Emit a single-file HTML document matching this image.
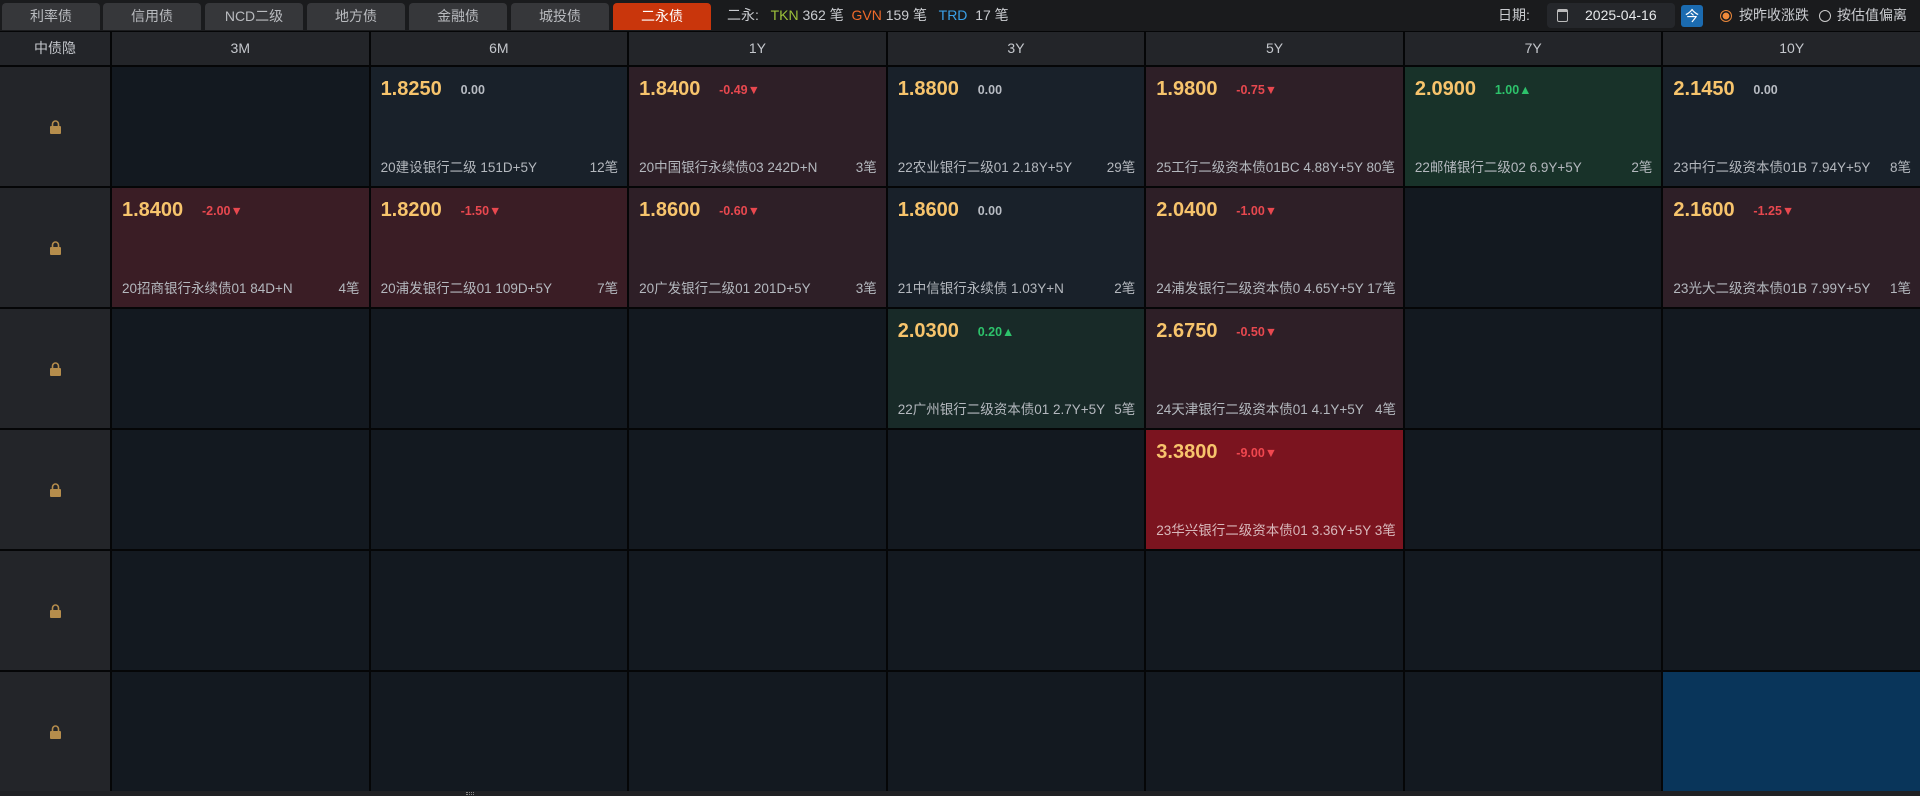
<!DOCTYPE html>
<html><head><meta charset="utf-8">
<style>
*{box-sizing:border-box;margin:0;padding:0}
body{width:1920px;height:796px;background:#050607;font-family:"Liberation Sans","Noto Sans CJK SC",sans-serif;overflow:hidden;position:relative;color:#c8ccd2}
.top{position:absolute;left:0;top:0;width:1920px;height:31px;background:#1a1b1d}
.tab{position:absolute;top:3px;height:27px;width:98px;background:#36373a;border-radius:4px 4px 0 0;color:#b9bbbf;font-size:14px;text-align:center;line-height:27px}
.tab.on{background:#c9360c;color:#fff}
.stat{position:absolute;top:0;left:727px;line-height:31px;font-size:14px;color:#c9cbcf;white-space:nowrap}
.stat b{font-weight:normal}
.right{position:absolute;top:0;line-height:31px;font-size:14px;color:#c9cbcf}
.grid{position:absolute;left:0;top:32px;width:1920px;display:grid;grid-template-columns:110px repeat(7,1fr);grid-template-rows:33px repeat(6,119px);gap:2px}
.h{background:#232529;color:#c4c7cc;font-size:14px;text-align:center;line-height:33px}
.l{background:#232529;display:flex;align-items:center;justify-content:center}
.c{background:#131920;position:relative}
.f{background:#19212a}.r{background:#2e1f27}.r2{background:#3a1d25}.g{background:#183229}.rr{background:#7b141f}.b{background:#09355a}
.p{position:absolute;left:10px;top:11px;font-size:20px;font-weight:bold;color:#f7c46c}
.d{position:absolute;top:16px;font-size:12.5px;font-weight:bold}
.dn{color:#e8484f}.up{color:#2dc26b}.z{color:#b8bcc3}
.n{position:absolute;left:10px;right:9px;bottom:10px;font-size:13.5px;color:#b4b8be;display:flex;justify-content:space-between;white-space:nowrap}
.bot{position:absolute;left:0;top:791px;width:1920px;height:5px;background:#202124}
</style></head><body>
<div class="top">
<div class="tab" style="left:2px">利率债</div>
<div class="tab" style="left:103px">信用债</div>
<div class="tab" style="left:205px">NCD二级</div>
<div class="tab" style="left:307px">地方债</div>
<div class="tab" style="left:409px">金融债</div>
<div class="tab" style="left:511px">城投债</div>
<div class="tab on" style="left:613px">二永债</div>
<div class="stat">二永:&nbsp;&nbsp; <b style="color:#9dc23a">TKN</b> 362 笔&nbsp; <b style="color:#f06a2a">GVN</b> 159 笔&nbsp;&nbsp; <b style="color:#3aa0e8">TRD</b>&nbsp; 17 笔</div>
<div class="right" style="left:1498px">日期:</div>
<div style="position:absolute;left:1547px;top:3px;width:128px;height:25px;background:#25272b;border-radius:4px;color:#e6e8ea;font-size:14px;line-height:25px;padding-left:38px">2025-04-16
<span style="position:absolute;left:10px;top:6px;width:11px;height:13px;border:1.5px solid #bbb;border-top-width:3px;border-radius:2px"></span></div>
<div style="position:absolute;left:1681px;top:5px;width:22px;height:22px;background:#1b6bb0;border-radius:3px;color:#fff;font-size:14px;text-align:center;line-height:22px">今</div>
<span style="position:absolute;left:1720px;top:10px;width:12px;height:12px;border-radius:50%;border:1.5px solid #e8863a;background:radial-gradient(#f08a3a 45%,transparent 50%)"></span>
<div class="right" style="left:1739px">按昨收涨跌</div>
<span style="position:absolute;left:1819px;top:10px;width:12px;height:12px;border-radius:50%;border:1.5px solid #ccc"></span>
<div class="right" style="left:1837px">按估值偏离</div>
</div>
<div class="grid">
<div class="h">中债隐</div><div class="h">3M</div><div class="h">6M</div><div class="h">1Y</div><div class="h">3Y</div><div class="h">5Y</div><div class="h">7Y</div><div class="h">10Y</div>

<div class="l"><svg width="11" height="14" viewBox="0 0 11 14"><path d="M2.5 6V4a3 3 0 0 1 6 0v2" fill="none" stroke="#b58d4c" stroke-width="1.6"/><rect x="0" y="6" width="11" height="8" rx="1" fill="#b58d4c"/></svg></div>
<div class="c"></div>
<div class="c f"><span class="p">1.8250</span><span class="d z" style="left:90px">0.00</span><div class="n"><span>20建设银行二级 151D+5Y</span><span>12笔</span></div></div>
<div class="c r"><span class="p">1.8400</span><span class="d dn" style="left:90px">-0.49▼</span><div class="n"><span>20中国银行永续债03 242D+N</span><span>3笔</span></div></div>
<div class="c f"><span class="p">1.8800</span><span class="d z" style="left:90px">0.00</span><div class="n"><span>22农业银行二级01 2.18Y+5Y</span><span>29笔</span></div></div>
<div class="c r"><span class="p">1.9800</span><span class="d dn" style="left:90px">-0.75▼</span><div class="n"><span>25工行二级资本债01BC 4.88Y+5Y 80笔</span></div></div>
<div class="c g"><span class="p">2.0900</span><span class="d up" style="left:90px">1.00▲</span><div class="n"><span>22邮储银行二级02 6.9Y+5Y</span><span>2笔</span></div></div>
<div class="c f"><span class="p">2.1450</span><span class="d z" style="left:90px">0.00</span><div class="n"><span>23中行二级资本债01B 7.94Y+5Y</span><span>8笔</span></div></div>

<div class="l"><svg width="11" height="14" viewBox="0 0 11 14"><path d="M2.5 6V4a3 3 0 0 1 6 0v2" fill="none" stroke="#b58d4c" stroke-width="1.6"/><rect x="0" y="6" width="11" height="8" rx="1" fill="#b58d4c"/></svg></div>
<div class="c r2"><span class="p">1.8400</span><span class="d dn" style="left:90px">-2.00▼</span><div class="n"><span>20招商银行永续债01 84D+N</span><span>4笔</span></div></div>
<div class="c r2"><span class="p">1.8200</span><span class="d dn" style="left:90px">-1.50▼</span><div class="n"><span>20浦发银行二级01 109D+5Y</span><span>7笔</span></div></div>
<div class="c r"><span class="p">1.8600</span><span class="d dn" style="left:90px">-0.60▼</span><div class="n"><span>20广发银行二级01 201D+5Y</span><span>3笔</span></div></div>
<div class="c f"><span class="p">1.8600</span><span class="d z" style="left:90px">0.00</span><div class="n"><span>21中信银行永续债 1.03Y+N</span><span>2笔</span></div></div>
<div class="c r"><span class="p">2.0400</span><span class="d dn" style="left:90px">-1.00▼</span><div class="n"><span>24浦发银行二级资本债0 4.65Y+5Y 17笔</span></div></div>
<div class="c"></div>
<div class="c r"><span class="p">2.1600</span><span class="d dn" style="left:90px">-1.25▼</span><div class="n"><span>23光大二级资本债01B 7.99Y+5Y</span><span>1笔</span></div></div>

<div class="l"><svg width="11" height="14" viewBox="0 0 11 14"><path d="M2.5 6V4a3 3 0 0 1 6 0v2" fill="none" stroke="#b58d4c" stroke-width="1.6"/><rect x="0" y="6" width="11" height="8" rx="1" fill="#b58d4c"/></svg></div>
<div class="c"></div><div class="c"></div><div class="c"></div>
<div class="c g" style="background:#182a28"><span class="p">2.0300</span><span class="d up" style="left:90px">0.20▲</span><div class="n"><span>22广州银行二级资本债01 2.7Y+5Y</span><span>5笔</span></div></div>
<div class="c r"><span class="p">2.6750</span><span class="d dn" style="left:90px">-0.50▼</span><div class="n"><span>24天津银行二级资本债01 4.1Y+5Y&nbsp;&nbsp; 4笔</span></div></div>
<div class="c"></div><div class="c"></div>

<div class="l"><svg width="11" height="14" viewBox="0 0 11 14"><path d="M2.5 6V4a3 3 0 0 1 6 0v2" fill="none" stroke="#b58d4c" stroke-width="1.6"/><rect x="0" y="6" width="11" height="8" rx="1" fill="#b58d4c"/></svg></div>
<div class="c"></div><div class="c"></div><div class="c"></div><div class="c"></div>
<div class="c rr"><span class="p">3.3800</span><span class="d dn" style="left:90px;color:#f0474f">-9.00▼</span><div class="n" style="color:#d8b8bb"><span>23华兴银行二级资本债01 3.36Y+5Y 3笔</span></div></div>
<div class="c"></div><div class="c"></div>

<div class="l"><svg width="11" height="14" viewBox="0 0 11 14"><path d="M2.5 6V4a3 3 0 0 1 6 0v2" fill="none" stroke="#b58d4c" stroke-width="1.6"/><rect x="0" y="6" width="11" height="8" rx="1" fill="#b58d4c"/></svg></div>
<div class="c"></div><div class="c"></div><div class="c"></div><div class="c"></div><div class="c"></div><div class="c"></div><div class="c"></div>

<div class="l"><svg width="11" height="14" viewBox="0 0 11 14"><path d="M2.5 6V4a3 3 0 0 1 6 0v2" fill="none" stroke="#b58d4c" stroke-width="1.6"/><rect x="0" y="6" width="11" height="8" rx="1" fill="#b58d4c"/></svg></div>
<div class="c"></div><div class="c"></div><div class="c"></div><div class="c"></div><div class="c"></div><div class="c"></div><div class="c b"></div>
</div>
<div class="bot"><div style="position:absolute;left:466px;top:1px;width:8px;height:3px;border-top:1px dotted #888;border-bottom:1px dotted #888"></div></div>
</body></html>
